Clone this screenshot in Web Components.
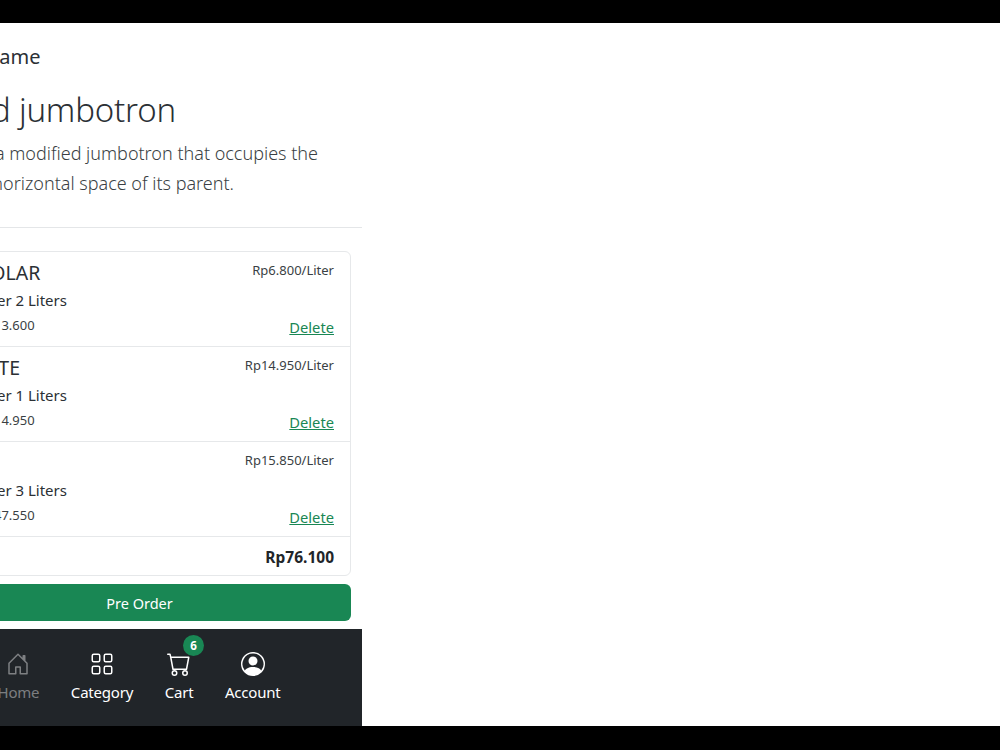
<!DOCTYPE html>
<html lang="en"><head><meta charset="utf-8"><title>Cart</title>
<style>
html,body{margin:0;height:750px;overflow:hidden;background:#000}
body{font-family:"Noto Sans","Open Sans","Liberation Sans",sans-serif;color:#212529}
</style></head><body>
<app-page>
  <brand-bar>Brand name</brand-bar>
  <hero-block heading="Fluid jumbotron">This is a modified jumbotron that occupies the<br>entire horizontal space of its parent.</hero-block>
  <cart-list total="Rp76.100">
    <cart-row name="BIOSOLAR" rate="Rp6.800/Liter" qty="Number 2 Liters" sum="Total Rp13.600"></cart-row>
    <cart-row name="DEXLITE" rate="Rp14.950/Liter" qty="Number 1 Liters" sum="Total Rp14.950"></cart-row>
    <cart-row name="DEX" rate="Rp15.850/Liter" qty="Number 3 Liters" sum="Total Rp47.550"></cart-row>
  </cart-list>
  <order-button>Pre Order</order-button>
  <bottom-nav>
    <nav-item label="Home" muted><svg viewBox="0 0 16 16" fill="currentColor"><path d="M8.354 1.146a.5.5 0 0 0-.708 0l-6 6A.5.5 0 0 0 1.5 7.5v7a.5.5 0 0 0 .5.5h4.5a.5.5 0 0 0 .5-.5v-4h2v4a.5.5 0 0 0 .5.5H14a.5.5 0 0 0 .5-.5v-7a.5.5 0 0 0-.146-.354L13 5.793V2.5a.5.5 0 0 0-.5-.5h-1a.5.5 0 0 0-.5.5v1.293L8.354 1.146zM2.5 14V7.707l5.5-5.5 5.5 5.5V14H10v-4a.5.5 0 0 0-.5-.5h-3a.5.5 0 0 0-.5.5v4H2.5z"/></svg></nav-item>
    <nav-item label="Category"><svg viewBox="0 0 16 16" fill="currentColor"><path d="M1 2.5A1.5 1.5 0 0 1 2.5 1h3A1.5 1.5 0 0 1 7 2.5v3A1.5 1.5 0 0 1 5.5 7h-3A1.5 1.5 0 0 1 1 5.5v-3zM2.5 2a.5.5 0 0 0-.5.5v3a.5.5 0 0 0 .5.5h3a.5.5 0 0 0 .5-.5v-3a.5.5 0 0 0-.5-.5h-3zm6.5.5A1.5 1.5 0 0 1 10.5 1h3A1.5 1.5 0 0 1 15 2.5v3A1.5 1.5 0 0 1 13.5 7h-3A1.5 1.5 0 0 1 9 5.5v-3zm1.5-.5a.5.5 0 0 0-.5.5v3a.5.5 0 0 0 .5.5h3a.5.5 0 0 0 .5-.5v-3a.5.5 0 0 0-.5-.5h-3zM1 10.5A1.5 1.5 0 0 1 2.5 9h3A1.5 1.5 0 0 1 7 10.5v3A1.5 1.5 0 0 1 5.5 15h-3A1.5 1.5 0 0 1 1 13.5v-3zm1.5-.5a.5.5 0 0 0-.5.5v3a.5.5 0 0 0 .5.5h3a.5.5 0 0 0 .5-.5v-3a.5.5 0 0 0-.5-.5h-3zm6.5.5A1.5 1.5 0 0 1 10.5 9h3a1.5 1.5 0 0 1 1.5 1.5v3a1.5 1.5 0 0 1-1.5 1.5h-3A1.5 1.5 0 0 1 9 13.5v-3zm1.5-.5a.5.5 0 0 0-.5.5v3a.5.5 0 0 0 .5.5h3a.5.5 0 0 0 .5-.5v-3a.5.5 0 0 0-.5-.5h-3z"/></svg></nav-item>
    <nav-item label="Cart" badge="6"><svg viewBox="0 0 16 16" fill="currentColor"><path d="M0 1.5A.5.5 0 0 1 .5 1H2a.5.5 0 0 1 .485.379L2.89 3H14.5a.5.5 0 0 1 .491.592l-1.5 8A.5.5 0 0 1 13 12H4a.5.5 0 0 1-.491-.408L2.01 3.607 1.61 2H.5a.5.5 0 0 1-.5-.5zM3.102 4l1.313 7h8.17l1.313-7H3.102zM5 12a2 2 0 1 0 0 4 2 2 0 0 0 0-4zm7 0a2 2 0 1 0 0 4 2 2 0 0 0 0-4zm-7 1a1 1 0 1 1 0 2 1 1 0 0 1 0-2zm7 0a1 1 0 1 1 0 2 1 1 0 0 1 0-2z"/></svg></nav-item>
    <nav-item label="Account"><svg viewBox="0 0 16 16" fill="currentColor"><path d="M11 6a3 3 0 1 1-6 0 3 3 0 0 1 6 0z"/><path fill-rule="evenodd" d="M0 8a8 8 0 1 1 16 0A8 8 0 0 1 0 8zm8-7a7 7 0 0 0-5.468 11.37C3.242 11.226 4.805 10 8 10s4.757 1.225 5.468 2.37A7 7 0 0 0 8 1z"/></svg></nav-item>
  </bottom-nav>
</app-page>
<script>
function def(tag, css, html){
  customElements.define(tag, class extends HTMLElement{
    connectedCallback(){
      if(this.shadowRoot) return;
      const r=this.attachShadow({mode:'open'});
      const get=n=>this.getAttribute(n)||'';
      r.innerHTML='<style>'+css+'</style>'+html(get);
    }
  });
}
def('app-page',
 ':host{display:block;height:703px;margin-top:23px;background:#fff;overflow:hidden}.panel{width:446px;height:703px;margin-left:-84px;display:flex;flex-direction:column;box-sizing:border-box}::slotted(*){flex:none}',
 ()=>'<div class="panel"><slot></slot></div>');
def('brand-bar',
 ':host{display:block;padding:19px 0 0 9px;height:30px;font-size:20px;line-height:30px;white-space:nowrap;color:#2b3035}',
 ()=>'<slot></slot>');
def('hero-block',
 ':host{display:block;margin-top:15px;padding:0 0 0 24px;border-bottom:1px solid #e4e6e8;height:140px;box-sizing:content-box;white-space:nowrap}h1{margin:0;height:46px;font-size:33px;line-height:46px;font-weight:300;letter-spacing:-.2px;color:#2b3035}p{margin:5px 0 0;font-size:18px;line-height:30px;font-weight:300;color:#3a3f44}',
 g=>'<h1>'+g('heading')+'</h1><p><slot></slot></p>');
def('cart-list',
 ':host{display:block;margin:23px 11px 0 12px;border:1px solid #e6e8ea;border-radius:6px;box-sizing:border-box;height:325px}.t{display:flex;justify-content:space-between;align-items:center;height:39px;padding:0 16px;font-size:15.5px}.t b{font-weight:700}',
 g=>'<slot></slot><div class="t"><span>Total</span><b>'+g('total')+'</b></div>');
def('cart-row',
 ':host{display:block;height:95px;box-sizing:border-box;border-bottom:1px solid #e6e8ea;padding:8px 16px 0}.a,.c{display:flex;justify-content:space-between}.a{height:28px;align-items:flex-start}.n{font-size:19.5px;line-height:28px;margin-top:-1px;color:#2b3035}.r{font-size:13px;line-height:20px;color:#3a3f44}.q{font-size:15px;line-height:22px;margin:1px 0 0 8px;color:#2b3035}.c{align-items:flex-end;margin-top:4px}.s{font-size:13px;line-height:20px;margin-bottom:2px;color:#3a3f44}a{font-size:14.7px;line-height:22px;margin-bottom:-1px;color:#198754;text-decoration:underline}',
 g=>'<div class="a"><span class="n">'+g('name')+'</span><span class="r">'+g('rate')+'</span></div><div class="q">'+g('qty')+'</div><div class="c"><span class="s">'+g('sum')+'</span><a href="#">Delete</a></div>');
def('order-button',
 ':host{display:block;margin:8px 11px 0 12px}button{display:block;width:100%;height:37px;border:0;border-radius:6px;background:#198754;color:#fff;font:inherit;font-size:14.5px;padding:0;margin:0}',
 ()=>'<button><slot></slot></button>');
def('bottom-nav',
 ':host{display:flex;justify-content:center;gap:31.5px;margin-top:8px;height:97px;background:#212529;box-sizing:border-box;padding-top:23px}',
 ()=>'<slot></slot>');
def('nav-item',
 ':host{display:flex;flex-direction:column;align-items:center;position:relative;color:#fff}:host([muted]){color:rgba(255,255,255,.42)}.i{width:24px;height:24px;display:block}::slotted(svg){width:24px;height:24px;display:block}.l{font-size:15px;letter-spacing:-.2px;line-height:24px;margin-top:4px;white-space:nowrap}.b{position:absolute;left:50%;top:-17px;margin-left:4px;width:21px;height:21px;border-radius:50%;background:#198754;color:#fff;font-size:11.5px;font-weight:700;line-height:21px;text-align:center}',
 g=>'<span class="i"><slot></slot></span><span class="l">'+g('label')+'</span>'+(g('badge')?'<span class="b">'+g('badge')+'</span>':''));
</script>
</body></html>
